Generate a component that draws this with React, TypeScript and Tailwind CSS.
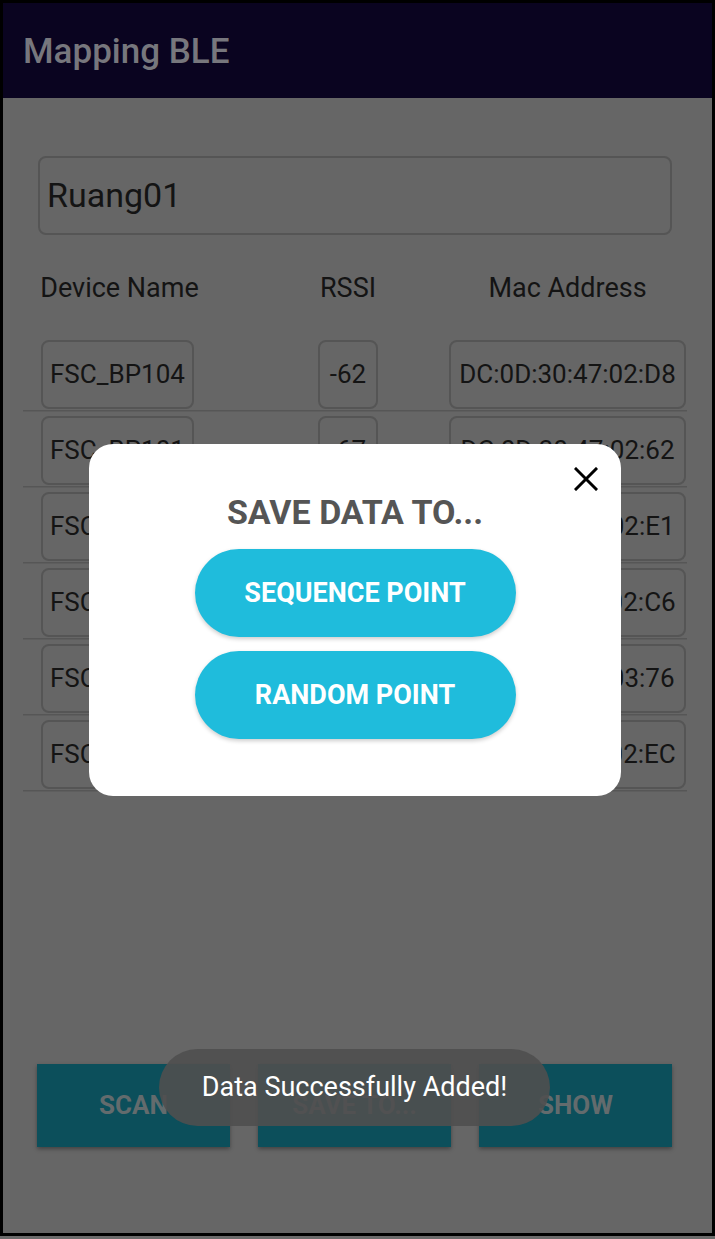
import React from "react";

const rows = [
  { name: "FSC_BP104", rssi: "-62", mac: "DC:0D:30:47:02:D8" },
  { name: "FSC_BP101", rssi: "-67", mac: "DC:0D:30:47:02:62" },
  { name: "FSC_BP102", rssi: "-70", mac: "DC:0D:30:47:02:E1" },
  { name: "FSC_BP103", rssi: "-72", mac: "DC:0D:30:47:02:C6" },
  { name: "FSC_BP105", rssi: "-75", mac: "DC:0D:30:47:03:76" },
  { name: "FSC_BP106", rssi: "-80", mac: "DC:0D:30:47:02:EC" },
];

function Cell({ w, children }: { w: string; children: React.ReactNode }) {
  return (
    <div
      className={`${w} h-[69px] shrink-0 rounded-[8px] border-2 border-[#555555] flex items-center justify-center text-[26px] text-[#141414] whitespace-nowrap`}
    >
      {children}
    </div>
  );
}

export default function App() {
  return (
    <div className="relative w-[715px] h-[1239px] bg-black font-['Roboto',sans-serif] overflow-hidden">
      <div className="absolute left-[3px] top-[3px] w-[709px] h-[1230px] flex flex-col bg-[#666666]">
        {/* Header */}
        <div className="h-[95px] shrink-0 bg-[#0a0420] flex items-center pl-[20px] pt-[2px]">
          <span className="text-[35px] font-medium text-[#77777d] leading-none">Mapping BLE</span>
        </div>

        {/* Body */}
        <div className="flex-1 flex flex-col">
          <div className="mt-[58px] ml-[35px] mr-[40px] h-[79px] rounded-[8px] border-2 border-[#555555] flex items-center pl-[7px]">
            <span className="text-[34px] text-[#141414]">Ruang01</span>
          </div>

          <div className="ml-[20px] w-[664px] flex flex-col">
            {/* column headers */}
            <div className="flex items-center h-[30px] mt-[38px] mb-[37px] text-[27px] text-[#141414] whitespace-nowrap">
              <div className="w-[20px] shrink-0" />
              <div className="w-[153px] shrink-0 flex justify-center">Device Name</div>
              <div className="w-[122px] shrink-0" />
              <div className="w-[60px] shrink-0 flex justify-center">RSSI</div>
              <div className="w-[71px] shrink-0" />
              <div className="w-[237px] shrink-0 flex justify-center">Mac Address</div>
            </div>

            {rows.map((r, i) => (
              <div key={i} className={`flex flex-col ${i === 0 ? "" : "pt-[4px]"}`}>
                <div className="flex">
                  <div className="w-[18px] shrink-0" />
                  <Cell w="w-[153px]">
                    <span className="w-full pl-[7px] text-left">{r.name}</span>
                  </Cell>
                  <div className="w-[124px] shrink-0" />
                  <Cell w="w-[60px]">{r.rssi}</Cell>
                  <div className="w-[71px] shrink-0" />
                  <Cell w="w-[237px]">{r.mac}</Cell>
                </div>
                <div className="h-[1px] mt-[1px] bg-[#565656]" />
                <div className="h-[1px] bg-[#5e5e5e]" />
              </div>
            ))}
          </div>

          <div className="flex-1" />

          {/* bottom buttons */}
          <div className="flex gap-[28px] pl-[34px] mb-[86px]">
            {["SCAN", "SAVE TO...", "SHOW"].map((t) => (
              <div
                key={t}
                className="w-[193px] h-[83px] bg-[#0c4f5b] flex items-center justify-center text-[26px] font-bold text-[#636b6d] shadow-[0_2px_4px_rgba(0,0,0,0.35)]"
              >
                {t}
              </div>
            ))}
          </div>
        </div>

        {/* Toast */}
        <div className="absolute left-[156px] top-[1046px] w-[391px] h-[77px] rounded-full bg-[#4f4f4f]/90 flex items-center justify-center">
          <span className="text-[27px] text-white">Data Successfully Added!</span>
        </div>

        {/* Modal */}
        <div className="absolute left-[86px] top-[441px] w-[532px] h-[352px] rounded-[24px] bg-white flex flex-col items-center">
          <button className="absolute right-[23px] top-[23px] w-[24px] h-[24px] flex items-center justify-center">
            <svg width="24" height="24" viewBox="0 0 24 24">
              <path d="M2 2 L22 22 M22 2 L2 22" stroke="#000" strokeWidth="3" strokeLinecap="square" />
            </svg>
          </button>
          <div className="mt-[51px] text-[34px] font-bold text-[#555555] leading-none">SAVE DATA TO...</div>
          <div className="mt-[20px] w-[321px] h-[88px] rounded-full bg-[#1fbcdc] shadow-[0_2px_4px_rgba(0,0,0,0.2)] flex items-center justify-center text-[27px] font-bold text-white">
            SEQUENCE POINT
          </div>
          <div className="mt-[14px] w-[321px] h-[88px] rounded-full bg-[#1fbcdc] shadow-[0_2px_4px_rgba(0,0,0,0.2)] flex items-center justify-center text-[27px] font-bold text-white">
            RANDOM POINT
          </div>
        </div>
      </div>
      <div className="absolute left-0 right-0 top-[1236px] h-[3px] bg-[#6b6b6b]" />
    </div>
  );
}
